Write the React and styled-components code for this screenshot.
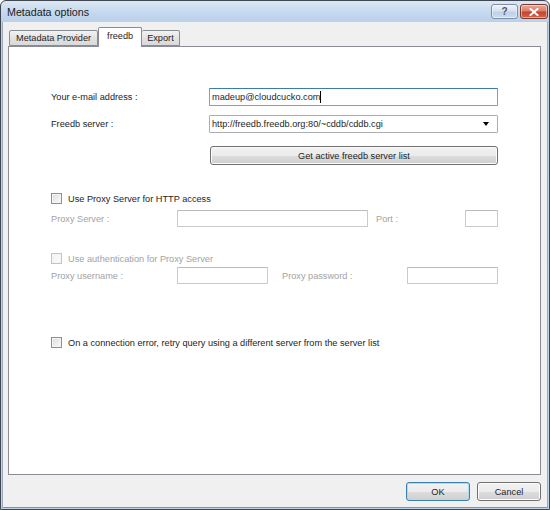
import React from "react";
import styled, { createGlobalStyle } from "styled-components";

const Global = createGlobalStyle`
  html, body { margin: 0; padding: 0; background: #ffffff; }
  body { font-family: "Liberation Sans", Arial, sans-serif; }
`;

const Window = styled.div`
  width: 550px;
  height: 510px;
  box-sizing: border-box;
  border: 1px solid #3f4650;
  border-radius: 6px 6px 0 0;
  background: linear-gradient(#dbe7f4 0px, #c4d8ee 12px, #b9d0ea 22px, #bdd3ec 100%);
  padding: 0 1px 1px 1px;
  display: flex;
  flex-direction: column;
  overflow: hidden;
`;

const TitleBar = styled.div`
  height: 21px;
  flex: none;
  display: flex;
  align-items: flex-start;
  padding: 0 0 0 5px;
`;

const Title = styled.div`
  flex: 1;
  font-size: 10.7px;
  line-height: 22px;
  color: #1a1a1a;
`;

const CaptionButtons = styled.div`
  display: flex;
  gap: 2px;
  padding-top: 3px;
`;

const CaptionButton = styled.div`
  width: ${(p) => p.$w}px;
  height: 15px;
  box-sizing: border-box;
  border: 1px solid ${(p) => (p.$close ? "#7b3a2c" : "#7e8fa6")};
  border-radius: 3px;
  background: ${(p) =>
    p.$close
      ? "linear-gradient(#e9a99a 0%, #db7f6a 45%, #c5452e 55%, #d2664c 100%)"
      : "linear-gradient(#eef3fa 0%, #d7e3f1 45%, #bfd1e8 55%, #cddcee 100%)"};
  box-shadow: inset 0 0 0 1px rgba(255, 255, 255, 0.45);
  display: flex;
  align-items: center;
  justify-content: center;
  color: ${(p) => (p.$close ? "#ffffff" : "#4a5870")};
  font-size: 10px;
  font-weight: bold;
  line-height: 1;
`;

const Client = styled.div`
  flex: 1;
  background: #f0f0f0;
  border: 1px solid #9aabbf;
  border-top: none;
  border-bottom: 1px solid #3fa9d8;
  display: flex;
  flex-direction: column;
  padding: 5px 6px 0 5px;
`;

const TabStrip = styled.div`
  height: 19px;
  display: flex;
  align-items: flex-end;
  padding-left: 1px;
  position: relative;
  z-index: 1;
`;

const Tab = styled.div`
  height: ${(p) => (p.$active ? 20 : 16)}px;
  box-sizing: border-box;
  padding: 0 ${(p) => p.$pad}px;
  margin-bottom: ${(p) => (p.$active ? -1 : 0)}px;
  border: 1px solid #898c95;
  border-bottom: ${(p) => (p.$active ? "none" : "1px solid #898c95")};
  border-left: ${(p) => (p.$noLeft ? "none" : "1px solid #898c95")};
  border-radius: 2px 2px 0 0;
  background: ${(p) => (p.$active ? "#ffffff" : "linear-gradient(#f2f2f2, #e3e3e3 50%, #d9d9d9)")};
  font-size: 9.2px;
  line-height: ${(p) => (p.$active ? 16 : 14)}px;
  color: #1e1e1e;
  white-space: nowrap;
`;

const Panel = styled.div`
  height: 429px;
  flex: none;
  box-sizing: border-box;
  background: #ffffff;
  border: 1px solid #898c95;
  padding: 0 42px;
  display: flex;
  flex-direction: column;
`;

const Row = styled.div`
  display: flex;
  align-items: center;
  height: ${(p) => p.$h}px;
  margin-top: ${(p) => p.$top}px;
  flex: none;
`;

const Label = styled.div`
  width: ${(p) => p.$w}px;
  flex: none;
  font-size: 9.2px;
  color: ${(p) => (p.$disabled ? "#a3a3a3" : "#1e1e1e")};
  white-space: nowrap;
`;

const Field = styled.div`
  width: ${(p) => p.$w}px;
  height: ${(p) => p.$h}px;
  flex: none;
  box-sizing: border-box;
  border: 1px solid ${(p) => (p.$focus ? "#6aa6df" : p.$disabled ? "#c9cacc" : "#abadb3")};
  border-top-color: ${(p) => (p.$focus ? "#3d7bad" : p.$disabled ? "#b9bbbf" : "#abadb3")};
  border-radius: 1px;
  background: #ffffff;
  display: flex;
  align-items: center;
  padding: 0 2px;
  font-size: 9.2px;
  color: #1e1e1e;
  white-space: nowrap;
  overflow: hidden;
`;

const Caret = styled.span`
  display: inline-block;
  width: 1px;
  height: 12px;
  background: #000;
`;

const SelectText = styled.span`
  flex: 1;
`;

const Arrow = styled.span`
  width: 0;
  height: 0;
  border-left: 3.5px solid transparent;
  border-right: 3.5px solid transparent;
  border-top: 4px solid #000;
  margin-right: 6px;
`;

const Button = styled.div`
  width: ${(p) => p.$w}px;
  height: 19px;
  flex: none;
  box-sizing: border-box;
  margin-left: ${(p) => p.$ml || 0}px;
  border: 1px solid ${(p) => (p.$default ? "#3c7fb1" : "#707070")};
  border-radius: 3px;
  background: linear-gradient(#f2f2f2 0%, #ebebeb 50%, #dddddd 51%, #cfcfcf 100%);
  box-shadow: inset 0 0 0 1px ${(p) => (p.$default ? "#a8dcf5" : "#fcfcfc")};
  display: flex;
  align-items: center;
  justify-content: center;
  font-size: 9.2px;
  color: #1e1e1e;
  white-space: nowrap;
`;

const Check = styled.div`
  display: flex;
  align-items: center;
  gap: 6px;
  font-size: 9.2px;
  color: ${(p) => (p.$disabled ? "#a3a3a3" : "#1e1e1e")};
  white-space: nowrap;
`;

const Box = styled.span`
  width: 11px;
  height: 11px;
  box-sizing: border-box;
  border: 1px solid ${(p) => (p.$disabled ? "#c4c4c4" : "#8e8f8f")};
  background: ${(p) =>
    p.$disabled
      ? "linear-gradient(135deg, #f2f2f2, #fbfbfb)"
      : "linear-gradient(135deg, #dcdcdc, #fbfbfb)"};
  box-shadow: inset 0 0 0 1px #f4f4f4;
  flex: none;
`;

const Gap = styled.div`
  width: ${(p) => p.$w}px;
  flex: none;
`;

const Footer = styled.div`
  display: flex;
  justify-content: flex-end;
  gap: 7px;
  padding-top: 7px;
`;

export default function App() {
  return (
    <>
      <Global />
      <Window>
        <TitleBar>
          <Title>Metadata options</Title>
          <CaptionButtons>
            <CaptionButton $w={27}>?</CaptionButton>
            <CaptionButton $w={28} $close>
              <svg width="10" height="8" viewBox="0 0 10 8">
                <path d="M1.5 1 L8.5 7 M8.5 1 L1.5 7" stroke="#ffffff" strokeWidth="2" strokeLinecap="square" />
              </svg>
            </CaptionButton>
          </CaptionButtons>
        </TitleBar>
        <Client>
          <TabStrip>
            <Tab $pad={6}>Metadata Provider</Tab>
            <Tab $active $pad={8}>freedb</Tab>
            <Tab $pad={5} $noLeft>Export</Tab>
          </TabStrip>
          <Panel>
            <Row $top={41} $h={18}>
              <Label $w={158}>Your e-mail address :</Label>
              <Field $w={289} $h={18} $focus>
                madeup@cloudcucko.com
                <Caret />
              </Field>
            </Row>
            <Row $top={9} $h={18}>
              <Label $w={158}>Freedb server :</Label>
              <Field $w={289} $h={18}>
                <SelectText>http://freedb.freedb.org:80/~cddb/cddb.cgi</SelectText>
                <Arrow />
              </Field>
            </Row>
            <Row $top={13} $h={19}>
              <Button $w={288} $ml={159}>Get active freedb server list</Button>
            </Row>
            <Row $top={27} $h={13}>
              <Check>
                <Box />
                Use Proxy Server for HTTP access
              </Check>
            </Row>
            <Row $top={5} $h={17}>
              <Label $w={126} $disabled>Proxy Server :</Label>
              <Field $w={191} $h={17} $disabled />
              <Gap $w={8} />
              <Label $w={89} $disabled>Port :</Label>
              <Field $w={33} $h={17} $disabled />
            </Row>
            <Row $top={25} $h={13}>
              <Check $disabled>
                <Box $disabled />
                Use authentication for Proxy Server
              </Check>
            </Row>
            <Row $top={2} $h={17}>
              <Label $w={126} $disabled>Proxy username :</Label>
              <Field $w={91} $h={17} $disabled />
              <Gap $w={14} />
              <Label $w={125} $disabled>Proxy password :</Label>
              <Field $w={91} $h={17} $disabled />
            </Row>
            <Row $top={52} $h={13}>
              <Check>
                <Box />
                On a connection error, retry query using a different server from the server list
              </Check>
            </Row>
          </Panel>
          <Footer>
            <Button $w={64} $default>OK</Button>
            <Button $w={64}>Cancel</Button>
          </Footer>
        </Client>
      </Window>
    </>
  );
}
